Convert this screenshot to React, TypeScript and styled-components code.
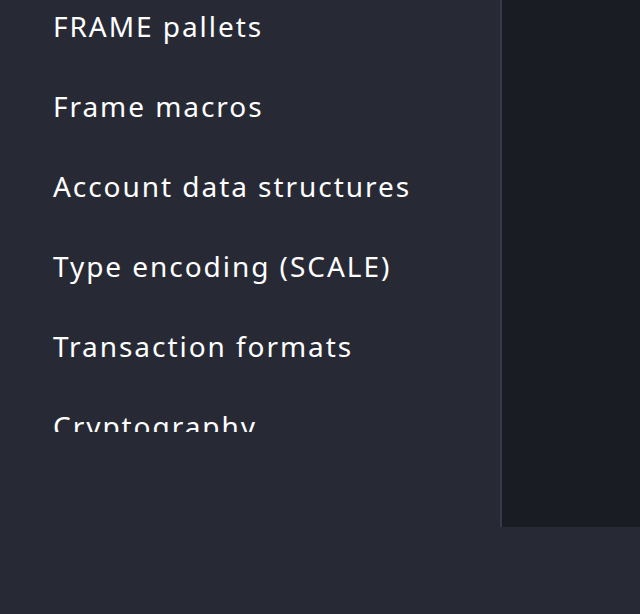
import React from "react";
import styled, { createGlobalStyle } from "styled-components";

const Global = createGlobalStyle`
  html, body { margin: 0; padding: 0; background: #272a35; }
  body { font-family: "Noto Sans", "Open Sans", sans-serif; }
  * { box-sizing: border-box; }
`;

const Page = styled.div`
  width: 640px;
  height: 614px;
  background: #272a35;
  display: flex;
  align-items: flex-start;
  overflow: hidden;
`;

const Sidebar = styled.nav`
  width: 500px;
  flex: none;
  height: 432px;
  overflow: hidden;
`;

const List = styled.ul`
  list-style: none;
  margin: -14px 0 0;
  padding: 0 0 0 53px;
`;

const Item = styled.li`
  height: 80px;
  display: flex;
  align-items: center;
  color: #ffffff;
  font-size: 28px;
  font-weight: 400;
  letter-spacing: 1.95px;
  white-space: nowrap;
`;

const Content = styled.main`
  flex: 1;
  height: 527px;
  background: #1a1c23;
  border-left: 2px solid #373b49;
`;

const items = [
  "FRAME pallets",
  "Frame macros",
  "Account data structures",
  "Type encoding (SCALE)",
  "Transaction formats",
  "Cryptography",
];

export default function App() {
  return (
    <>
      <Global />
      <Page>
        <Sidebar>
          <List>
            {items.map((t) => (
              <Item key={t}>{t}</Item>
            ))}
          </List>
        </Sidebar>
        <Content />
      </Page>
    </>
  );
}
